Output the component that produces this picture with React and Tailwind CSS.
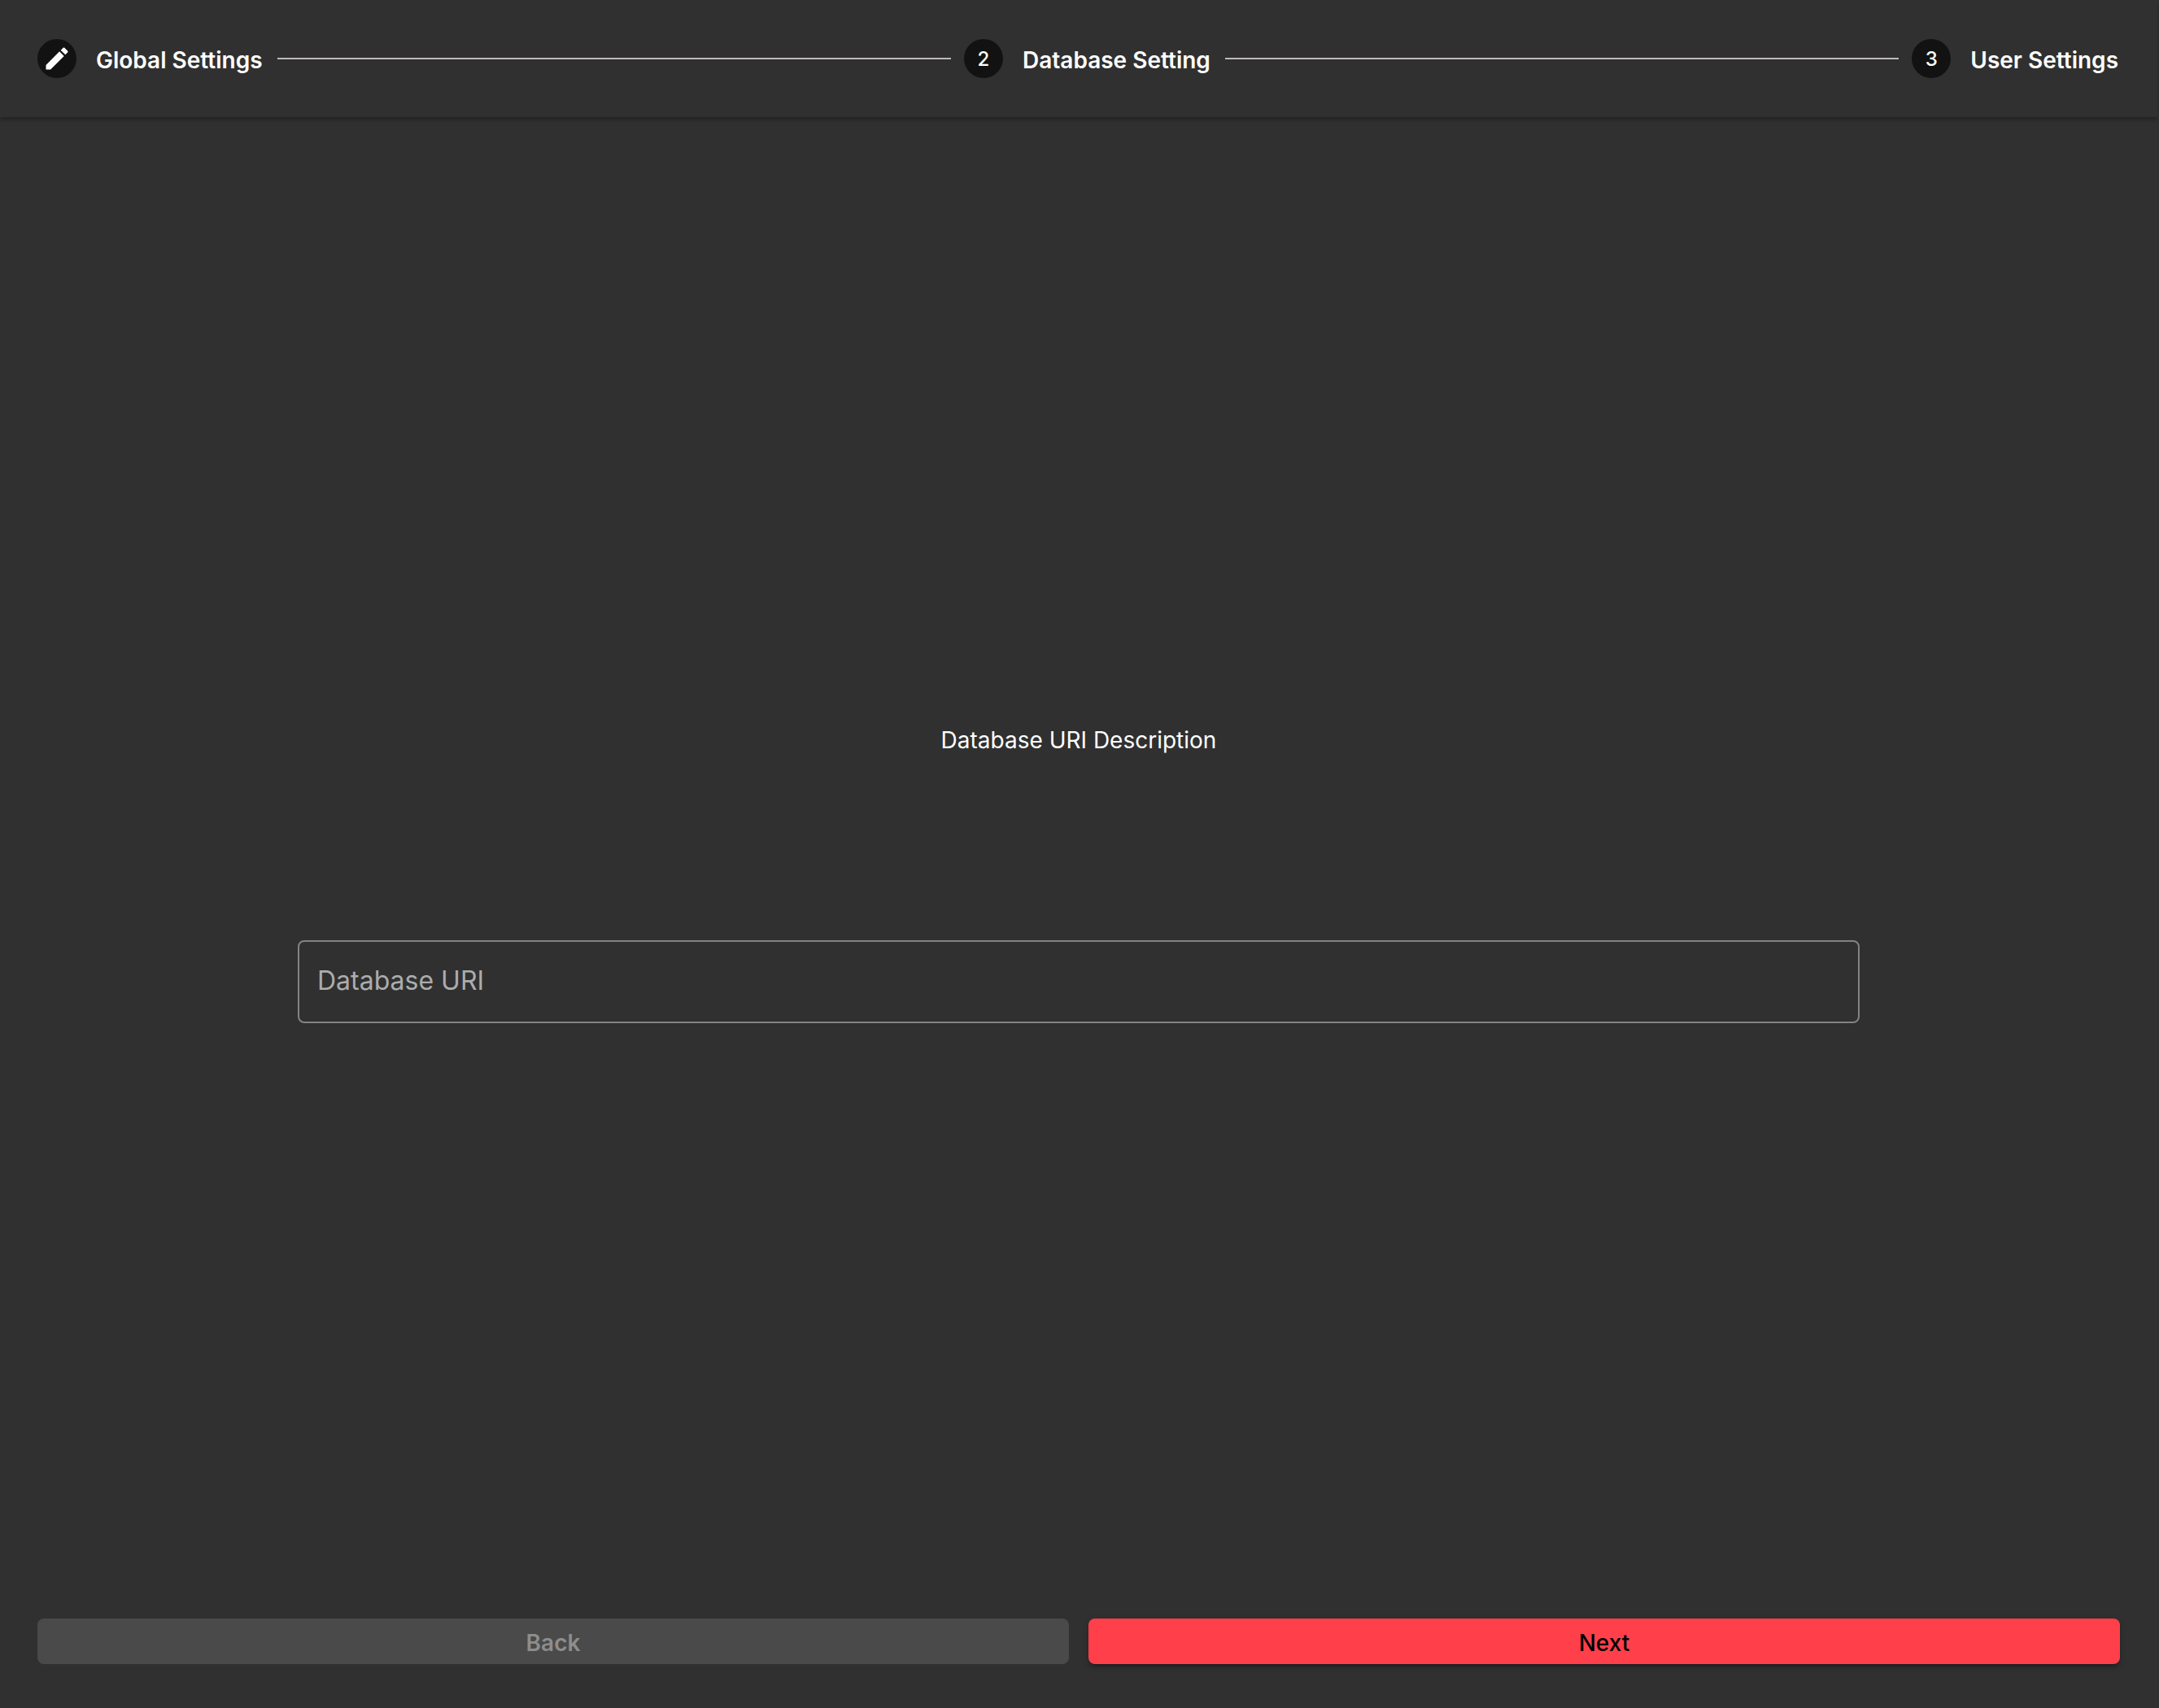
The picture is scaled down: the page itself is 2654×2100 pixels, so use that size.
function Pencil() {
  return (
    <svg viewBox="0 0 24 24" className="size-9" fill="currentColor" aria-hidden="true">
      <path d="M20.71,7.04C21.1,6.65 21.1,6 20.71,5.63L18.37,3.29C18,2.9 17.35,2.9 16.96,3.29L15.12,5.12L18.87,8.87M3,17.25V21H6.75L17.81,9.93L14.06,6.18L3,17.25Z" />
    </svg>
  );
}

function Step({ icon, label, current }) {
  return (
    <button
      type="button"
      aria-current={current ? "step" : undefined}
      className="flex shrink-0 items-center gap-6 font-semibold"
    >
      <span className="flex size-12 items-center justify-center rounded-full bg-[#121212] text-2xl font-medium">
        {icon}
      </span>
      <span className="pt-1 pr-0.5">{label}</span>
    </button>
  );
}

function StepNumber({ children }) {
  return <span className="pt-0.5">{children}</span>;
}

function Connector() {
  return <span className="h-0.5 flex-1 bg-[#bfb9bd]" aria-hidden="true" />;
}

export default function App() {
  return (
    <div className="flex min-h-screen flex-col bg-[#303030] pr-0.5 font-['Inter',sans-serif] text-[28px] leading-10 text-white">
      <header className="flex h-36 items-center gap-4 px-[46px] shadow-[0_4px_4px_rgba(0,0,0,0.24)]">
        <Step icon={<Pencil />} label="Global Settings" />
        <Connector />
        <Step icon={<StepNumber>2</StepNumber>} label="Database Setting" current />
        <Connector />
        <Step icon={<StepNumber>3</StepNumber>} label="User Settings" />
      </header>

      <main className="flex flex-1 flex-col px-[46px] pb-[54px]">
        <form className="flex flex-1 flex-col" onSubmit={(e) => e.preventDefault()}>
          <div className="flex flex-1 flex-col items-center justify-center gap-[226px] pt-3.5">
            <p id="uri-description">Database URI Description</p>
            <input
              type="text"
              aria-label="Database URI"
              aria-describedby="uri-description"
              placeholder="Database URI"
              className="h-[102px] w-3/4 rounded-lg border-2 border-[#838383] bg-transparent px-[22px] pb-1 text-[32px] outline-none placeholder:text-[#acacac]"
            />
          </div>
          <div className="grid grid-cols-2 gap-6">
            <button
              type="button"
              disabled
              className="h-14 rounded-lg bg-[#4a4a4a] pt-1 font-semibold text-[#8d8d8d]"
            >
              Back
            </button>
            <button
              type="submit"
              className="h-14 rounded-lg bg-[#ff3f4a] pt-1 font-medium text-black shadow-[0_6px_2px_-4px_rgba(0,0,0,0.2),0_4px_4px_rgba(0,0,0,0.14),0_2px_10px_rgba(0,0,0,0.12)]"
            >
              Next
            </button>
          </div>
        </form>
      </main>
    </div>
  );
}
